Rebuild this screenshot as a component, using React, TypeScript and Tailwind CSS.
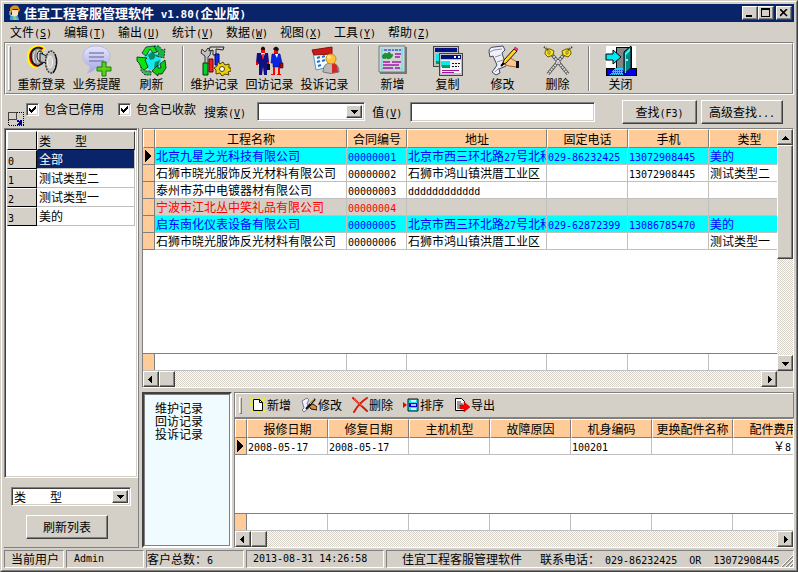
import React from "react";

const raised =
  "border border-t-white border-l-white border-r-[#404040] border-b-[#404040] shadow-[inset_-1px_-1px_0_#808080] bg-[#d4d0c8]";
const sunken =
  "border border-t-[#808080] border-l-[#808080] border-r-white border-b-white shadow-[inset_1px_1px_0_#404040,inset_-1px_-1px_0_#d4d0c8] bg-white";
const dither =
  "bg-[conic-gradient(#fff_25%,#d4d0c8_0_50%,#fff_0_75%,#d4d0c8_0)] bg-[length:2px_2px]";

/* Latin runs are set in a half-width face beside full-width Chinese characters. */
function Mix({ text }: { text: string }) {
  const parts = text.split(/([\x20-\x7e]+)/).filter(Boolean);
  return (
    <>
      {parts.map((p, i) =>
        /^[\x20-\x7e]/.test(p) ? (
          <span key={i} className="whitespace-pre font-['DejaVu_Sans_Mono',monospace] text-[10px] leading-none">{p}</span>
        ) : (
          p
        ),
      )}
    </>
  );
}

function Key({ label, k }: { label: string; k: string }) {
  return (
    <span className="whitespace-nowrap">
      {label}
      <span className="font-['DejaVu_Sans_Mono',monospace] text-[10px] leading-none">
        (<u>{k}</u>)
      </span>
    </span>
  );
}

function Arrow({ dir }: { dir: "up" | "down" | "left" | "right" }) {
  const d = {
    up: "M4 0h1v1h1v1h1v1h1v1H1V3h1V2h1V1h1z",
    down: "M1 0h7v1H7v1H6v1H5v1H4V3H3V2H2V1H1z",
    left: "M5 0v7H4V6H3V5H2V4H1V3h1V2h1V1h1V0z",
    right: "M3 0v7h1V6h1V5h1V4h1V3H6V2H5V1H4V0z",
  }[dir];
  return (
    <svg width="9" height="7" viewBox={dir === "up" || dir === "down" ? "0 -2 9 7" : "0 0 9 7"} shapeRendering="crispEdges">
      <path d={d} fill="#000" />
    </svg>
  );
}

function ScrollButton({ dir, label }: { dir: "up" | "down" | "left" | "right"; label: string }) {
  return (
    <button aria-label={label} className={`flex h-4 w-4 shrink-0 items-center justify-center ${raised}`}>
      <Arrow dir={dir} />
    </button>
  );
}

function HScroll() {
  return (
    <div className={`flex h-4 ${dither}`}>
      <ScrollButton dir="left" label="向左滚动" />
      <div className={`w-4 ${raised}`} />
      <div className="flex-1" />
      <ScrollButton dir="right" label="向右滚动" />
    </div>
  );
}

/* ---------- toolbar drawings ---------- */

const Ic = ({ children, size = 32 }: { children: React.ReactNode; size?: number }) => (
  <svg width={size} height={size} viewBox={`0 0 ${size} ${size}`} className="shrink-0" aria-hidden="true">
    {children}
  </svg>
);

const LoginIcon = () => (
  <Ic>
    <path d="M18 5C14 0 4 1 3 11c0 6 3 10 8 11" fill="none" stroke="#ff0" strokeWidth="4" />
    <path d="M17 4C13 1 5 3 4 11c0 6 3 9 7 10" fill="none" stroke="#f00" strokeWidth="2" />
    <path d="M16 4C11 1 5 4 5 11s3 9 7 10l5-3" fill="#9a9a9a" stroke="#111" strokeWidth="1.500" />
    <path d="M9 6c-2 3-2 9 0 12M12 5c-2 4-2 9 0 13" fill="none" stroke="#e8e8e8" />
    <ellipse cx="14" cy="11" rx="3" ry="5" fill="#d8d8d8" stroke="#111" />
    <path d="M14 8l9 4v6l-9-1z" fill="#c0c0c0" stroke="#111" />
    <ellipse cx="25" cy="17" rx="5.500" ry="11" fill="#c0c0c0" />
    <ellipse cx="25" cy="17" rx="5.500" ry="11" fill="none" stroke="#222" strokeWidth="1.300" strokeDasharray="2 1" />
    <ellipse cx="24" cy="17" rx="2.500" ry="6" fill="#d4d0c8" stroke="#f4f4f4" />
    <path d="M29 9c3 6 2 14-2 19" stroke="#111" strokeWidth="1.300" fill="none" />
  </Ic>
);

const RemindIcon = () => (
  <Ic>
    <defs>
      <linearGradient id="bubble" x1="0" y1="0" x2="0" y2="1">
        <stop offset="0" stopColor="#e6e6ff" />
        <stop offset="1" stopColor="#a5a5e0" />
      </linearGradient>
    </defs>
    <path d="M15 1C7 1 2 5 2 11c0 5 3 9 7 10 0 3-1 5-3 7 5-1 8-3 10-6 8 0 13-5 13-11S23 1 15 1z" fill="url(#bubble)" stroke="#b8b8e8" />
    <path d="M8 8h15M8 12h15M8 16h15" stroke="#8585b5" strokeWidth="1.5" />
    <path d="M21 17h4v5h5v4h-5v5h-4v-5h-5v-4h5z" fill="#5fce20" stroke="#168000" />
  </Ic>
);

const RefreshIcon = () => (
  <Ic>
    <circle cx="16" cy="16" r="9" fill="#16e8ee" />
    <path d="M12 10l4-3 4 3-2 4-4 1zM19 17l5-2-2 6-4 2z" fill="#008c68" />
    <path d="M6 8l4-6 8-1 3 6-4 1-3-4-4 7z" fill="#19df19" stroke="#033" strokeWidth=".8" />
    <path d="M18 1h5l3 4 3-1-1 9-8-2 3-2z" fill="#19b54a" stroke="#021" strokeWidth=".8" strokeDasharray="2 1" />
    <path d="M1 12l10 1-2 2 3 7-5 4-4-8-2-2z" fill="#09e609" stroke="#021" strokeWidth=".8" />
    <path d="M5 22l4 4h6v4H9L5 26z" fill="#36b567" stroke="#021" strokeWidth=".8" strokeDasharray="2 1" />
    <path d="M29 15l1 8-4 6h-4v2l-6-5 6-6v3h3l-1-4z" fill="#10cb10" stroke="#021" strokeWidth=".8" />
  </Ic>
);

const ToolsIcon = () => (
  <Ic>
    <path d="M3 4l3 3 3-4 3 3-1 4-2 2v7H6v-8L2 8z" fill="#c0c0c0" stroke="#333" />
    <path d="M11 2h14l-1 3-7-1v6h-3V5l-4 1z" fill="#d8d8d8" stroke="#222" />
    <path d="M4 18h5v12H4z" fill="#00d030" stroke="#003c00" />
    <path d="M10 14h4v13h-4z" fill="#f02020" stroke="#600" />
    <path d="M16 9h4v11h-4z" fill="#1028f0" stroke="#000070" />
    <path d="M19 17l2 2 3-2 2 3 4-1v4h2v3l-3 1 1 3-4-1-3 2-2-3-4 1v-4l-2-2 3-2z" fill="#e8d010" stroke="#514000" />
    <circle cx="23" cy="24" r="2.5" fill="#fff" stroke="#514000" />
  </Ic>
);

const PeopleIcon = () => (
  <Ic>
    <path d="M7 4h4v4H7zM20 4h4v5h-4z" fill="#f30b0b" />
    <path d="M7 3q2-3 4 0v2H7zM19 4q3-5 6 0l-1 2-4-1z" fill="#111" />
    <path d="M3 8h11l1 9-2 2v11h-3l-1-8-1 8H5V19l-3-1z" fill="#101080" />
    <path d="M7 8h4l-2 6z" fill="#fff" />
    <path d="M9 9v5" stroke="#e00" strokeWidth="1.5" />
    <path d="M2 17h2v3H2zM13 17h2v2h-2z" fill="#e00" />
    <path d="M13 19h3v6h-3z" fill="#111" />
    <path d="M18 9h8l2 9-2 1v3h-7v-4h-2z" fill="#0b24e0" stroke="#06106a" strokeWidth=".6" />
    <path d="M21 9h3l-1 4z" fill="#fff" />
    <path d="M19 22h2v7h-2zM24 22h2v7h-2zM17 29h4v1h-4zM23 29h4v1h-4z" fill="#f00" />
    <path d="M26 18h3v5h-3z" fill="#b00" stroke="#111" strokeWidth=".6" />
  </Ic>
);

const ComplaintIcon = () => (
  <Ic>
    <path d="M4 7l18-3 2 17-17 4z" fill="#f5faff" stroke="#5795d1" />
    <path d="M3 5l20-3v7L5 10z" fill="#ca1b16" stroke="#8a1010" />
    <path d="M8 13l3-1M13 12l3-1M8 17l3-1M13 16l3-1M9 21l3-1" stroke="#2874ba" strokeWidth="2" />
    <path d="M14 27q0-9 8-9t8 9q-8 3-16 0z" fill="#b9b9b9" stroke="#777" />
    <path d="M23 18q6 0 6 9l-6 1z" fill="#d52626" />
    <circle cx="22" cy="14" r="5" fill="#ffc13a" stroke="#d38a12" />
    <circle cx="20" cy="12" r="2" fill="#ffe694" />
  </Ic>
);

const NewIcon = () => (
  <Ic>
    <path d="M3 2h27v27H3z" fill="#777" />
    <path d="M2 1h26v26H2z" fill="#d0d5d1" stroke="#6a8080" />
    <path d="M4 5h22M4 24h22M5 3v23M25 3v23" stroke="#54e0eb" />
    <path d="M7 5h10M18 5h6" stroke="#1515e0" strokeDasharray="3 1" />
    <path d="M6 10l2-2 2 1 2-2 2 2 2 1-2 3-3 1-2-1-2 1-2-2z" fill="#1c9331" stroke="#126c20" strokeDasharray="1 1" />
    <path d="M18 9h6M18 12h5M6 17h7M15 17h9M6 20h16M6 23h10M18 23h5" stroke="#aa13ac" strokeWidth="1.5" />
  </Ic>
);

const CopyIcon = () => (
  <Ic>
    <g shapeRendering="crispEdges">
      <path d="M1 1h25v20H1z" fill="#c0c0c0" stroke="#444" />
      <path d="M3 3h22v4H3z" fill="#001080" />
      <path d="M4 9h9v7H4z" fill="#12e5ef" />
      <path d="M4 16h9v3H4z" fill="#009950" />
      <path d="M7 8h23v22H7z" fill="#c0c0c0" stroke="#444" />
      <path d="M9 10h20v4H9z" fill="#001080" />
      <path d="M22 11h2v2h-2zM26 11h2v2h-2z" fill="#fff" />
      <path d="M9 15h20v13H9z" fill="#f4f4f4" />
      <path d="M9 16h9v6H9z" fill="#00efef" />
      <path d="M10 20h8v3h-8z" fill="#009950" />
      <path d="M20 18h8M20 21h7" stroke="#111" strokeDasharray="2 1" />
      <path d="M10 25h17M10 27h12" stroke="#9a159a" strokeWidth="1" />
    </g>
  </Ic>
);

const EditIcon = () => (
  <Ic>
    <path d="M2 7q0-5 5-5l9-1 2 4-3 3 4 13-7 3 1 4-4 2-4-3 3-4 2-3-4-9-3 1z" fill="#f0f0fb" stroke="#47475d" />
    <path d="M3 7l4-2 8-1M8 27l4-4M8 12l6-2M10 17l6-2" stroke="#9090ac" fill="none" />
    <path d="M18 15q3-4 7-1l5 3v5l-8-1-5-2z" fill="#ffc58c" stroke="#a26a36" />
    <path d="M29 16h3v7h-3z" fill="#111" />
    <path d="M15 20l2-5L27 4l3 2-11 12z" fill="#ffd42b" stroke="#151500" />
    <path d="M27 4l3 2 1-2-3-2z" fill="#ec3d85" stroke="#7a1440" strokeWidth=".5" />
    <path d="M14 21l3-3" stroke="#000" strokeWidth="2" />
  </Ic>
);

const SwordsIcon = () => (
  <Ic>
    <path d="M8 7L26 29M24 7L6 29" stroke="#444" strokeWidth="3.500" />
    <path d="M8 7L26 29M24 7L6 29" stroke="#d8d8d8" strokeWidth="2" strokeDasharray="2 .7" />
    <path d="M3 9q0-6 5-5l4 2-1 4-5 2zM29 9q0-6-5-5l-4 2 1 4 5 2z" fill="#f5e51b" stroke="#6d5c00" />
    <path d="M6 6h2v3H6zM24 6h2v3h-2z" fill="#d4d0c8" stroke="#8d7800" strokeWidth=".8" />
    <path d="M2 2l4 3M30 2l-4 3" stroke="#332b00" strokeWidth="2" strokeDasharray="1 1" />
  </Ic>
);

const ExitIcon = () => (
  <Ic>
    <g shapeRendering="crispEdges">
      <path d="M1 1h30v30H1z" fill="#fff" />
      <path d="M1 23h30v7H1z" fill="#0000f0" stroke="#000" />
      <path d="M11 2h15v21H11z" fill="#858585" stroke="#000" />
      <path d="M10 23h9l-1 7H5z" fill="#17d5f2" />
      <path d="M9 25h9M7 27h11M6 29h12" stroke="#0834d0" strokeDasharray="1 1" />
    </g>
    <path d="M19 7l7-6v22l-7 6z" fill="#008b8b" stroke="#000" />
    <path d="M20 8l5-5v3l-4 4v18h-1z" fill="#2ff" />
    <circle cx="22" cy="15" r="1" fill="#fff" />
    <path d="M1 9h7V5l8 7-8 7v-4H1z" fill="#00e8f4" stroke="#000" />
  </Ic>
);

type Tool = [string, () => React.ReactElement];
const toolGroups: Tool[][] = [
  [["重新登录", LoginIcon], ["业务提醒", RemindIcon], ["刷新", RefreshIcon]],
  [["维护记录", ToolsIcon], ["回访记录", PeopleIcon], ["投诉记录", ComplaintIcon]],
  [["新增", NewIcon], ["复制", CopyIcon], ["修改", EditIcon], ["删除", SwordsIcon]],
  [["关闭", ExitIcon]],
];

/* ---------- small drawings ---------- */

const AddSmall = () => (
  <Ic size={16}>
    <path d="M1 1l3 3M8 0v3M15 1l-3 3M0 8h3M16 8h-3M1 15l3-3M8 16v-3M15 15l-3-3" stroke="#f4f400" strokeWidth="2" />
    <path d="M3.5 2.500h6l3 3v8h-9z" fill="#fff" stroke="#000" />
    <path d="M9.500 2.500v3h3" fill="none" stroke="#000" />
  </Ic>
);
const EditSmall = () => (
  <Ic size={16}>
    <path d="M1 4l5-3 2 2-2 3 2 5-5 4-2-2 2-2z" fill="#f1f1ff" stroke="#777792" />
    <path d="M8 9l4-2 4 3v3l-6-1z" fill="#d98e4a" stroke="#111" />
    <path d="M5 12L14 2" stroke="#111" strokeWidth="2" />
    <path d="M9 7l4-5" stroke="#ffd42b" />
  </Ic>
);
const DeleteSmall = () => (
  <Ic size={16}>
    <path d="M1 1l14 13M15 1Q7 6 2 15" stroke="#d61a08" strokeWidth="2" fill="none" strokeLinecap="round" />
    <path d="M2 2l8 7" stroke="#ff6c42" />
  </Ic>
);
const SortSmall = () => (
  <Ic size={16}>
    <path d="M0 5l4 3-4 3z" fill="#e00" />
    <path d="M5 2h10v12H5z" fill="#20e0ee" stroke="#111" />
    <path d="M6 6h8v4H6z" fill="#0000e8" />
    <path d="M8 4h5M8 8h5M8 12h5" stroke="#fff" strokeWidth="1.500" />
  </Ic>
);
const ExportSmall = () => (
  <Ic size={16}>
    <path d="M1.500 1.500h6l3 3v9h-9z" fill="#fff" stroke="#000" />
    <path d="M3 5h4M3 7h6M3 9h5M3 11h4" stroke="#333" />
    <path d="M6 8h4V5l6 5-6 5v-3H6z" fill="#f00" stroke="#900" strokeWidth=".5" />
  </Ic>
);
const smallTools: Tool[] = [
  ["新增", AddSmall], ["修改", EditSmall], ["删除", DeleteSmall], ["排序", SortSmall], ["导出", ExportSmall],
];

/* ---------- data grid ---------- */

type Col = { title: string; w: number };
type Row = { cells: string[]; tone?: string };

function DataGrid({ cols, rows, vscroll }: { cols: Col[]; rows: Row[]; vscroll?: boolean }) {
  const total = cols.reduce((s, c) => s + c.w, 12);
  return (
    <div className="flex min-h-0 flex-1 flex-col border border-t-[#808080] border-l-[#808080] border-r-white border-b-white">
      <div className="flex min-h-0 flex-1">
        <div className="flex min-w-0 flex-1 flex-col overflow-hidden bg-white">
          <table className="table-fixed border-separate border-spacing-0" style={{ width: total }}>
            <colgroup>
              <col className="w-3" />
              {cols.map((c) => (
                <col key={c.title} style={{ width: c.w }} />
              ))}
            </colgroup>
            <thead>
              <tr>
                <td className="h-[19px] border border-t-white border-l-white border-r-[#808080] border-b-[#808080] bg-[#ffcc99] p-0" />
                {cols.map((c) => (
                  <th key={c.title} className="h-[19px] overflow-hidden border border-t-white border-l-white border-r-[#808080] border-b-[#808080] bg-[#ffcc99] p-0 text-center leading-4 font-normal whitespace-nowrap">
                    {c.title}
                  </th>
                ))}
              </tr>
            </thead>
            <tbody>
              {rows.map((r, i) => (
                <tr key={i} className={r.tone ?? "bg-white text-black"}>
                  <td className="h-[17px] border-r border-b border-[#808080] bg-[#ffcc99] p-0">
                    {(i === 0) && (
                      <svg width="7" height="12" viewBox="0 0 7 12" className="mx-auto block" shapeRendering="crispEdges">
                        <path d="M0 0l6 6-6 6z" />
                      </svg>
                    )}
                  </td>
                  {r.cells.map((c, j) => (
                    <td key={j} className={`h-[17px] overflow-hidden border-r border-b border-[#c0c0c0] py-0 pr-0 leading-4 whitespace-nowrap ${c.startsWith("￥") ? "pl-10" : "pl-px"}`}>
                      <Mix text={c} />
                    </td>
                  ))}
                </tr>
              ))}
            </tbody>
          </table>
          <div className="flex-1" />
          <div className="flex h-[18px] shrink-0 border-t border-b border-t-[#808080] border-b-[#c0c0c0]">
            <div className="w-3 shrink-0 border-r border-[#808080] bg-[#ffcc99]" />
            {cols.map((c) => (
              <div key={c.title} className="shrink-0 border-r border-[#c0c0c0]" style={{ width: c.w }} />
            ))}
          </div>
        </div>
        {vscroll && (
          <div className={`flex w-4 flex-col ${dither}`}>
            <ScrollButton dir="up" label="向上滚动" />
            <div className={`h-[114px] ${raised}`} />
            <div className="flex-1" />
            <ScrollButton dir="down" label="向下滚动" />
          </div>
        )}
      </div>
      <div className={vscroll ? "bg-[#d4d0c8] pr-4" : ""}>
        <HScroll />
      </div>
    </div>
  );
}

const projectCols: Col[] = [
  { title: "工程名称", w: 192 }, { title: "合同编号", w: 60 }, { title: "地址", w: 140 },
  { title: "固定电话", w: 81 }, { title: "手机", w: 81 }, { title: "类型", w: 81 },
];
const projectRows: Row[] = [
  { tone: "bg-[#00ffff] text-[#0000ff]", cells: ["北京九星之光科技有限公司", "00000001", "北京市西三环北路27号北科", "029-86232425", "13072908445", "美的"] },
  { cells: ["石狮市晓光服饰反光材料有限公司", "00000002", "石狮市鸿山镇洪厝工业区", "", "13072908445", "测试类型二"] },
  { cells: ["泰州市苏中电镀器材有限公司", "00000003", "dddddddddddd", "", "", ""] },
  { tone: "bg-[#d4d0c8] text-[#ff0000]", cells: ["宁波市江北丛中笑礼品有限公司", "00000004", "", "", "", ""] },
  { tone: "bg-[#00ffff] text-[#0000ff]", cells: ["启东南化仪表设备有限公司", "00000005", "北京市西三环北路27号北科", "029-62872399", "13086785470", "美的"] },
  { cells: ["石狮市晓光服饰反光材料有限公司", "00000006", "石狮市鸿山镇洪厝工业区", "", "", "测试类型一"] },
];
const repairCols: Col[] = ["报修日期", "修复日期", "主机机型", "故障原因", "机身编码", "更换配件名称", "配件费用"].map(
  (title) => ({ title, w: 81 }),
);
const repairRows: Row[] = [{ cells: ["2008-05-17", "2008-05-17", "", "", "100201", "", "￥8"] }];

const menus = [["文件", "S"], ["编辑", "T"], ["输出", "U"], ["统计", "V"], ["数据", "W"], ["视图", "X"], ["工具", "Y"], ["帮助", "Z"]];
const types = ["全部", "测试类型二", "测试类型一", "美的"];

function Combo({ id, label, width, options }: { id: string; label?: string; width: string; options: string[] }) {
  return (
    <div className={`flex h-[19px] p-[2px] ${sunken} ${width}`}>
      <select id={id} aria-label={label} className="min-w-0 flex-1 appearance-none whitespace-pre bg-transparent leading-[13px] outline-none">
        {options.map((o) => (
          <option key={o}>{o}</option>
        ))}
      </select>
      <span className={`pointer-events-none flex w-4 items-center justify-center ${raised}`}>
        <Arrow dir="down" />
      </span>
    </div>
  );
}

function Check({ id, label }: { id: string; label: string }) {
  return (
    <div className="flex h-[13px] items-center gap-[5px]">
      <span className={`grid h-[13px] w-[13px] ${sunken}`}>
        <input id={id} type="checkbox" defaultChecked className="peer col-start-1 row-start-1 appearance-none" />
        <svg viewBox="0 0 11 11" className="pointer-events-none invisible col-start-1 row-start-1 h-[11px] w-[11px] peer-checked:visible" shapeRendering="crispEdges">
          <path d="M2 4v3h1v1h1v1h1V8h1V7h1V6h1V5h1V2H8v1H7v1H6v1H5v1H4V5H3V4z" />
        </svg>
      </span>
      <label htmlFor={id} className="whitespace-nowrap">{label}</label>
    </div>
  );
}

const field = "flex items-center overflow-hidden whitespace-nowrap border border-t-[#808080] border-l-[#808080] border-r-white border-b-white";
const winBtn = `flex h-[14px] w-4 items-center justify-center ${raised}`;

export default function App() {
  return (
    <div className="h-screen min-h-[480px] overflow-hidden border border-t-[#d4d0c8] border-l-[#d4d0c8] border-r-[#404040] border-b-[#404040] bg-[#d4d0c8] font-['Noto_Sans_CJK_SC',sans-serif] text-[12px] leading-4 text-black">
      <div className="flex h-full flex-col border border-t-white border-l-white border-r-[#808080] border-b-[#808080] p-[2px]">
        <header className="flex h-[18px] shrink-0 items-center bg-[#0a246a] pr-[2px] pl-[3px] text-white">
          <svg width="16" height="16" viewBox="0 0 16 16" className="mr-[1px]" aria-hidden="true">
            <path d="M3 15q-1-5 4-5t5 5z" fill="#42a6dc" />
            <path d="M7 11l4 4H6z" fill="#7fe15e" />
            <path d="M5 5h6v5q-3 3-6 0z" fill="#ffe0b8" />
            <path d="M3 7V3q3-4 8-2l2 4-2 3V4H6L4 8z" fill="#d99022" />
            <path d="M3 6v4l4 1" stroke="#bfe7ff" fill="none" />
          </svg>
          <h1 className="flex-1 text-[13px] leading-[18px] font-bold whitespace-pre">
            佳宜工程客服管理软件<span className="font-['DejaVu_Sans_Mono',monospace] text-[11px] leading-none"> v1.80(</span>企业版<span className="font-['DejaVu_Sans_Mono',monospace] text-[11px] leading-none">)</span>
          </h1>
          <button aria-label="最小化" className={winBtn}>
            <svg width="10" height="8" viewBox="0 0 10 8" shapeRendering="crispEdges"><path d="M1 6h6v2H1z" /></svg>
          </button>
          <button aria-label="最大化" className={winBtn}>
            <svg width="10" height="10" viewBox="0 0 10 10" shapeRendering="crispEdges"><path d="M0 0h9v9H0zM1 2v6h7V2z" fillRule="evenodd" /></svg>
          </button>
          <button aria-label="关闭窗口" className={`ml-[2px] ${winBtn}`}>
            <svg width="8" height="8" viewBox="0 0 8 8"><path d="M0 0l7 7M7 0L0 7" stroke="#000" strokeWidth="1.600" /></svg>
          </button>
        </header>

        <nav className="flex h-5 shrink-0 items-center gap-3 pl-[6px]">
          {menus.map(([l, k]) => (
            <button key={k} className="w-[42px] text-left whitespace-nowrap"><Key label={l} k={k} /></button>
          ))}
        </nav>

        <div className="h-[53px] shrink-0 border border-t-[#808080] border-l-[#808080] border-r-white border-b-white">
          <div className="flex h-full items-center border border-t-white border-l-white border-r-[#808080] border-b-[#808080] pl-[2px]">
            <div className="mr-[3px] h-[45px] w-[3px] border border-t-white border-l-white border-r-[#808080] border-b-[#808080]" />
            {toolGroups.map((g, i) => (
              <React.Fragment key={i}>
                {i > 0 && <div className={`h-[45px] w-[2px] border-l border-l-[#808080] bg-white ${i === 2 ? "mr-[5px] ml-[6px]" : "mx-[3px]"}`} />}
                {g.map(([name, Icon]) => (
                  <button key={name} className="flex h-[47px] w-[55px] flex-col items-center whitespace-nowrap">
                    <Icon />
                    <span className="leading-[13px]">{name}</span>
                  </button>
                ))}
              </React.Fragment>
            ))}
          </div>
        </div>

        <div className="flex h-[33px] shrink-0 items-center pr-[11px] pl-1">
          <svg width="16" height="14" viewBox="0 0 16 14" className="mt-auto mr-[2px] mb-[2px]" shapeRendering="crispEdges" aria-hidden="true">
            <path d="M.5.5h15v13H.5z" fill="none" stroke="#000" strokeDasharray="1 1" />
            <path d="M.5.5h8v7h-8z" fill="#d4d0c8" stroke="#444" />
            <path d="M9 8h2v1h1V8h2v5H9v-1h1v-1h1v-1H9z" fill="#0000a0" />
          </svg>
          <div className="mb-[5px] flex gap-[14px]">
            <Check id="stopped" label="包含已停用" />
            <Check id="paid" label="包含已收款" />
          </div>
          <label htmlFor="search-field" className="ml-2"><Key label="搜索" k="V" /></label>
          <div className="ml-[11px]"><Combo id="search-field" width="w-[108px]" options={[""]} /></div>
          <label htmlFor="search-value" className="ml-[7px]"><Key label="值" k="V" /></label>
          <input id="search-value" className={`ml-2 h-5 w-[185px] min-w-0 px-1 outline-none ${sunken}`} />
          <div className="flex-1" />
          <button className={`h-6 w-[75px] whitespace-nowrap ${raised}`}><Mix text="查找(F3)" /></button>
          <button className={`ml-1 h-6 w-[82px] whitespace-nowrap ${raised}`}><Mix text="高级查找..." /></button>
        </div>

        <main className="flex min-h-0 flex-1 gap-[3px]">
          <aside className="flex w-[135px] shrink-0 flex-col border-r border-b border-[#808080]">
            <div className={`min-h-0 flex-1 p-[2px] ${sunken}`}>
              <table className="w-full table-fixed border-separate border-spacing-0 bg-white">
                <colgroup><col className="w-[30px]" /><col /></colgroup>
                <thead>
                  <tr>
                    <td className="h-[19px] border border-t-white border-l-white border-r-black border-b-black bg-[#d4d0c8] p-0" />
                    <th className="h-[19px] border border-t-white border-l-white border-r-[#404040] border-b-black bg-[#d4d0c8] px-px py-0 text-left leading-4 font-normal whitespace-pre">类　　型</th>
                  </tr>
                </thead>
                <tbody>
                  {types.map((t, i) => (
                    <tr key={t}>
                      <td className="h-[19px] border border-t-white border-l-[#d4d0c8] border-r-black border-b-black bg-[#d4d0c8] p-0 leading-4"><Mix text={String(i)} /></td>
                      <td className={`h-[19px] border-r border-b border-[#c0c0c0] px-[2px] py-0 leading-4 ${i === 0 ? "bg-[#0a246a] text-white" : "bg-white"}`}>{t}</td>
                    </tr>
                  ))}
                </tbody>
              </table>
            </div>
            <div className="flex h-[69px] shrink-0 flex-col gap-[9px] pt-[9px] pl-[7px]">
              <Combo id="group-by" label="分类" width="w-[120px]" options={["类　　型"]} />
              <button className={`ml-[15px] h-6 w-[82px] ${raised}`}>刷新列表</button>
            </div>
          </aside>

          <div className="flex min-w-0 flex-1 flex-col gap-1">
            <DataGrid cols={projectCols} rows={projectRows} vscroll />
            <section className="flex h-[156px] shrink-0 gap-[2px]">
              <div className="w-[90px] shrink-0 border-2 border-t-[#404040] border-l-[#404040] border-r-white border-b-white">
                <ul className="h-full border border-[#808080] bg-[#f0fbff] pt-[6px] pl-[10px] leading-[13px]">
                  <li>维护记录</li>
                  <li>回访记录</li>
                  <li>投诉记录</li>
                </ul>
              </div>
              <div className="flex min-w-0 flex-1 flex-col">
                <div className="flex h-[26px] shrink-0 items-center border border-[#808080] pl-1 shadow-[inset_1px_1px_0_#fff]">
                  <div className="mr-2 h-[17px] w-[3px] border border-t-white border-l-white border-r-[#808080] border-b-[#808080]" />
                  {smallTools.map(([name, Icon]) => (
                    <button key={name} className="flex w-[51px] items-center gap-px whitespace-nowrap"><Icon />{name}</button>
                  ))}
                </div>
                <DataGrid cols={repairCols} rows={repairRows} />
              </div>
            </section>
          </div>
        </main>

        <footer className="mt-[2px] flex h-[18px] shrink-0 gap-[2px]">
          <div className={`w-[60px] shrink-0 pl-[6px] ${field}`}>当前用户</div>
          <div className={`w-[78px] shrink-0 pl-[7px] ${field}`}><Mix text="Admin" /></div>
          <div className={`w-[98px] shrink-0 ${field}`}><span><Mix text="客户总数：6" /></span></div>
          <div className={`w-[138px] shrink-0 pl-[6px] ${field}`}><Mix text="2013-08-31 14:26:58" /></div>
          <div className={`flex-1 pl-[15px] ${field}`}>
            <span>佳宜工程客服管理软件</span>
            <span className="ml-[18px]">联系电话：</span>
            <span className="ml-[5px]"><Mix text="029-86232425  OR  13072908445" /></span>
            <svg width="12" height="12" viewBox="0 0 12 12" className="mt-auto ml-auto shrink-0" aria-hidden="true">
              <path d="M1 12L12 1M5 12l7-7M9 12l3-3" stroke="#808080" strokeWidth="1.500" />
              <path d="M0 12L12 0M4 12l8-8M8 12l4-4" stroke="#fff" />
            </svg>
          </div>
        </footer>
      </div>
    </div>
  );
}
